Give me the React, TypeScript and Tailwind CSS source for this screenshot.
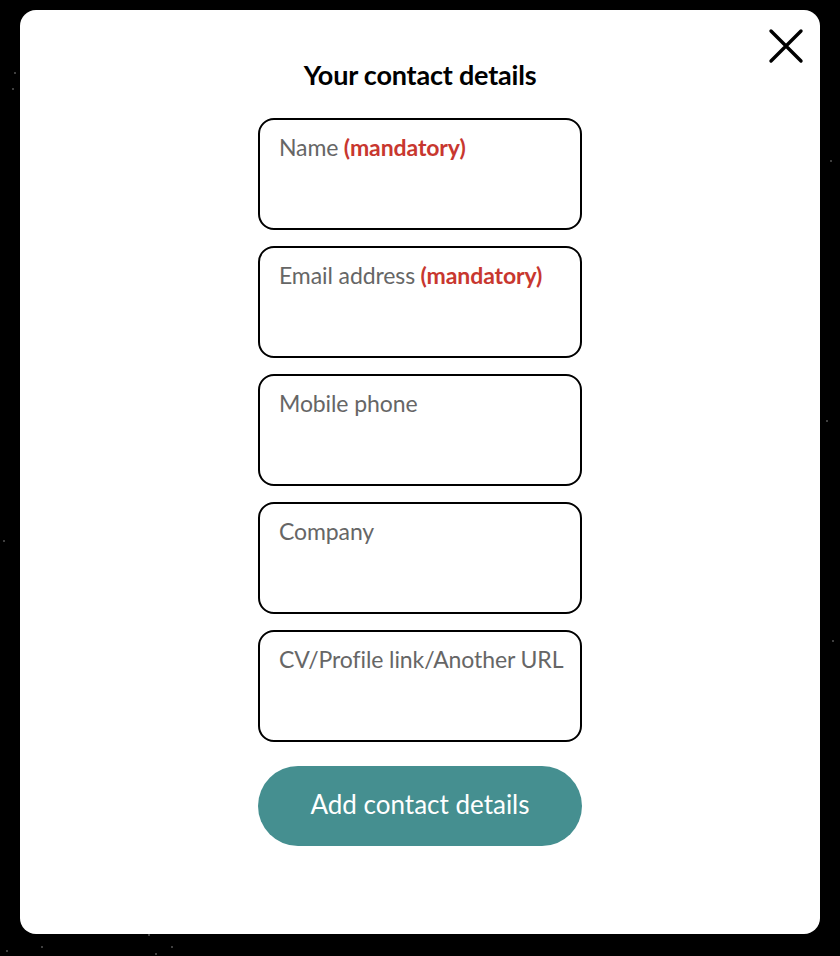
const fields = [
  { label: "Name", mandatory: true },
  { label: "Email address", mandatory: true },
  { label: "Mobile phone", mandatory: false },
  { label: "Company", mandatory: false },
  { label: "CV/Profile link/Another URL", mandatory: false },
];

// faint stars in the backdrop
const stars = [
  "left-[14px] top-[72px]",
  "left-[12px] top-[88px]",
  "left-[6px] top-[950px]",
  "left-[41px] top-[946px]",
  "left-[148px] top-[934px]",
  "left-[155px] top-[953px]",
  "left-[171px] top-[946px]",
  "left-[830px] top-[160px]",
  "left-[826px] top-[420px]",
  "left-[832px] top-[640px]",
  "left-[3px] top-[540px]",
];

export default function App() {
  return (
    <div
      className="relative min-h-[956px] w-full bg-black px-[20px] pt-[10px] pb-[22px]"
      style={{ fontFamily: "Lato, 'Noto Sans', sans-serif" }}
    >
      {stars.map((s) => (
        <span key={s} className={`absolute h-[2px] w-[2px] rounded-full bg-[#555] ${s}`} />
      ))}

      <div className="relative flex h-[924px] flex-col items-center rounded-[16px] bg-white pt-[49px]">
        {/* Close */}
        <button className="absolute right-[16px] top-[18px] h-[36px] w-[36px] text-black" aria-label="Close">
          <svg viewBox="0 0 36 36" className="h-[36px] w-[36px]" fill="none" stroke="currentColor" strokeWidth="3.4" strokeLinecap="round">
            <path d="M3 3 L33 33 M33 3 L3 33" />
          </svg>
        </button>

        <h2 className="text-[27px] font-bold leading-[32px] tracking-[-0.2px] text-black">
          Your contact details
        </h2>

        <div className="mt-[27px] flex w-[324px] flex-col gap-[16px]">
          {fields.map((f) => (
            <div
              key={f.label}
              className="h-[112px] whitespace-nowrap rounded-[16px] border-2 border-black pl-[19px] pr-[8px] pt-[13px] text-[23px] leading-[29px] tracking-[-0.1px] text-[#666666]"
            >
              {f.label}
              {f.mandatory && <span className="font-bold text-[#c8372f]"> (mandatory)</span>}
            </div>
          ))}
        </div>

        <button className="mt-[24px] h-[80px] w-[324px] rounded-full bg-[#458f90] pb-[3px] text-[26px] text-white">
          Add contact details
        </button>
      </div>
    </div>
  );
}
